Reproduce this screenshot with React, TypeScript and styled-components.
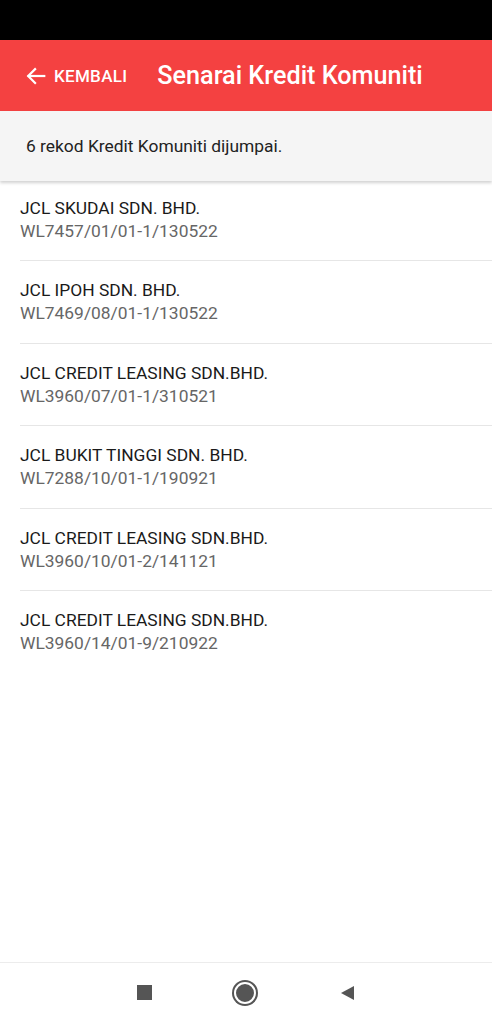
import styled, { createGlobalStyle } from "styled-components";

const GlobalStyle = createGlobalStyle`
  html, body {
    margin: 0;
    padding: 0;
    background: #ffffff;
    font-family: Roboto, "Liberation Sans", sans-serif;
  }
`;

const Screen = styled.div`
  width: 492px;
  height: 1024px;
  display: flex;
  flex-direction: column;
  background: #ffffff;
  overflow: hidden;
`;

const StatusBar = styled.div`
  height: 40px;
  background: #000000;
  flex-shrink: 0;
`;

const Header = styled.header`
  height: 71px;
  background: #f44141;
  display: flex;
  align-items: center;
  padding: 0 0 0 25px;
  flex-shrink: 0;
`;

const BackButton = styled.button`
  display: flex;
  align-items: center;
  gap: 7px;
  background: transparent;
  border: 0;
  padding: 0;
  color: #ffffff;
  font-family: Roboto, "Liberation Sans", sans-serif;
  font-size: 17px;
  font-weight: 500;
  letter-spacing: 0.3px;
  cursor: pointer;
`;

const Title = styled.h1`
  margin: 0 0 0 30px;
  color: #ffffff;
  font-size: 25.2px;
  font-weight: 500;
`;

const InfoBar = styled.div`
  height: 70px;
  margin-bottom: -2px;
  background: #f5f5f5;
  display: flex;
  align-items: center;
  padding-left: 26px;
  font-size: 17.4px;
  color: #222222;
  box-shadow: 0 2px 3px rgba(0, 0, 0, 0.18);
  position: relative;
  z-index: 1;
  flex-shrink: 0;
`;

const List = styled.ul`
  list-style: none;
  margin: 0;
  padding: 0;
  flex: 1;
`;

const Item = styled.li`
  margin-left: 20px;
  height: 82.4px;
  box-sizing: border-box;
  padding-top: 17px;
  border-bottom: 1px solid #e6e6e6;

  &:last-child {
    border-bottom: 0;
  }
`;

const Company = styled.div`
  font-size: 17.4px;
  color: #1a1a1a;
  line-height: 24px;
`;

const RefNo = styled.div`
  font-size: 17.4px;
  color: #666666;
  line-height: 22px;
`;

const NavBar = styled.nav`
  height: 59px;
  border-top: 1px solid #ececec;
  display: flex;
  align-items: center;
  justify-content: center;
  gap: 82px;
  padding-bottom: 2px;
  flex-shrink: 0;
`;

const NavSquare = styled.div`
  width: 15px;
  height: 15px;
  background: #555555;
`;

const NavCircle = styled.div`
  width: 18px;
  height: 18px;
  border-radius: 50%;
  background: #555555;
  border: 2px solid #ffffff;
  box-shadow: 0 0 0 2px #555555;
`;

const records = [
  { name: "JCL SKUDAI SDN. BHD.", ref: "WL7457/01/01-1/130522" },
  { name: "JCL IPOH SDN. BHD.", ref: "WL7469/08/01-1/130522" },
  { name: "JCL CREDIT LEASING SDN.BHD.", ref: "WL3960/07/01-1/310521" },
  { name: "JCL BUKIT TINGGI SDN. BHD.", ref: "WL7288/10/01-1/190921" },
  { name: "JCL CREDIT LEASING SDN.BHD.", ref: "WL3960/10/01-2/141121" },
  { name: "JCL CREDIT LEASING SDN.BHD.", ref: "WL3960/14/01-9/210922" },
];

export default function App() {
  return (
    <Screen>
      <GlobalStyle />
      <StatusBar />
      <Header>
        <BackButton>
          <svg width="22" height="22" viewBox="0 0 24 24" fill="none" stroke="#ffffff" strokeWidth="2.4" strokeLinecap="square">
            <path d="M21 12H4" />
            <path d="M11 4.5L3.5 12l7.5 7.5" />
          </svg>
          KEMBALI
        </BackButton>
        <Title>Senarai Kredit Komuniti</Title>
      </Header>
      <InfoBar>{records.length} rekod Kredit Komuniti dijumpai.</InfoBar>
      <List>
        {records.map((r, i) => (
          <Item key={i}>
            <Company>{r.name}</Company>
            <RefNo>{r.ref}</RefNo>
          </Item>
        ))}
      </List>
      <NavBar>
        <NavSquare />
        <NavCircle />
        <svg width="18" height="18" viewBox="0 0 18 18">
          <path d="M16 2L3 9l13 7z" fill="#555555" />
        </svg>
      </NavBar>
    </Screen>
  );
}
